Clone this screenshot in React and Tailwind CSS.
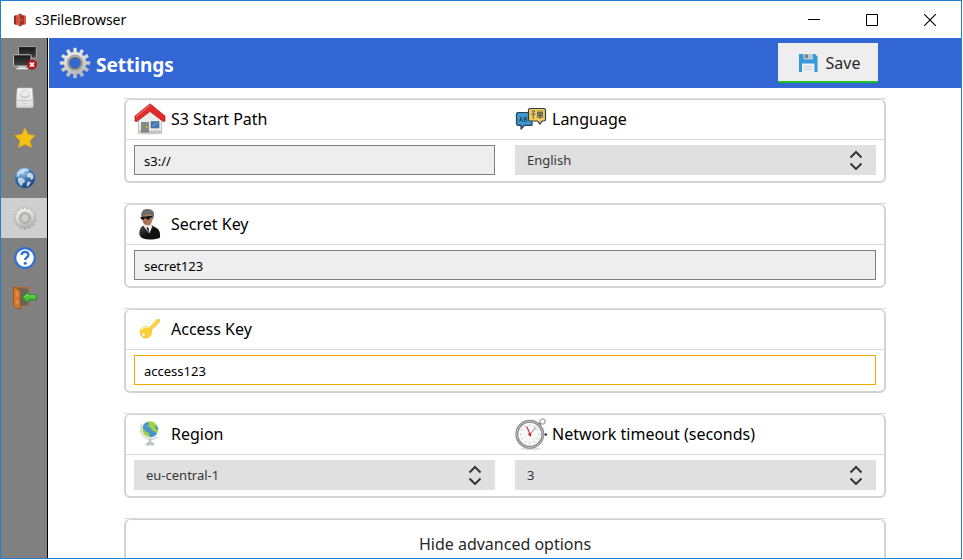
import { useState } from "react";

const svgProps = { "aria-hidden": true, className: "block size-full" };

function AppLogo() {
  return (
    <svg viewBox="0 0 14 16" {...svgProps}>
      <path d="M1 4 3 3v10l-2-1z" fill="#8c2f24" />
      <path d="M3 3 7 4.500v7L3 13z" fill="#d9503f" />
      <path d="M11 3 7 4.500v7l4 1.500z" fill="#a5352a" />
      <path d="M13 4l-2-1v10l2-1z" fill="#e0574a" />
      <path d="M7 1.500 9.500 3v3L7 6.500 4.500 6V3z" fill="#963025" />
      <path d="M7 1.500v5L4.500 6V3z" fill="#e25b4c" />
      <path d="M7 14.500 9.500 13v-3L7 9.500l-2.500.5v3z" fill="#963025" />
      <path d="M7 14.500v-5l-2.500.5v3z" fill="#e25b4c" />
      <path d="M5 7.200h4v1.600H5z" fill="#c9604f" />
    </svg>
  );
}

function Monitors() {
  return (
    <svg viewBox="0 0 24 24" {...svgProps}>
      <defs>
        <linearGradient id="screen" x1="0" y1="0" x2="0" y2="1">
          <stop offset="0" stopColor="#151515" />
          <stop offset="1" stopColor="#444" />
        </linearGradient>
      </defs>
      <rect x="5.500" y=".6" width="17.800" height="11.500" rx=".6" fill="url(#screen)" stroke="#aaa" />
      <path d="M6 20h6l1 2.500H5z" fill="#c8c8c8" />
      <rect x=".6" y="8.800" width="17.400" height="11.200" rx=".6" fill="url(#screen)" stroke="#c4c4c4" />
      <path d="M3.500 22.600h11" stroke="#ececec" strokeWidth="1.400" />
      <circle cx="19" cy="18.600" r="4.700" fill="#c31219" stroke="#8e0d12" strokeWidth=".6" />
      <path d="m17 16.600 4 4m0-4-4 4" stroke="#fff" strokeWidth="1.800" />
    </svg>
  );
}

function Drive() {
  return (
    <svg viewBox="0 0 24 24" {...svgProps}>
      <defs>
        <linearGradient id="drive" x1="0" y1="0" x2="0" y2="1">
          <stop offset="0" stopColor="#fafafa" />
          <stop offset="1" stopColor="#dadada" />
        </linearGradient>
      </defs>
      <path d="M5.500 2h12.500q1.300 0 1.400 1.300l.8 11.700v5.200q0 1.500-1.600 1.500H4.900q-1.600 0-1.600-1.500V15l.8-11.700Q4.200 2 5.500 2z" fill="url(#drive)" stroke="#bbb" strokeWidth=".7" />
      <ellipse cx="11.800" cy="8" rx="5" ry="4" fill="#ebebeb" stroke="#cfcfcf" strokeWidth=".8" />
      <path d="M7.500 9.500q4.300 3.500 8.600 0" fill="none" stroke="#bcbcbc" />
      <path d="M4 14.500h15.700" stroke="#c6c6c6" strokeWidth=".8" />
      <rect x="7" y="16" width="9.800" height="3.500" rx=".6" fill="#f8f8f8" stroke="#c4c4c4" strokeWidth=".5" />
      <path d="M8.500 17.800h6.800" stroke="#aaa" strokeWidth=".8" />
    </svg>
  );
}

function Star() {
  return (
    <svg viewBox="0 0 24 24" {...svgProps}>
      <path d="m12 2 3.200 6.600 7 .9-5.200 4.900 1.400 7.100L12 18.200l-6.400 3.300L7 14.400 1.800 9.500l7-.9z" fill="#f5c211" stroke="#e8a020" strokeWidth=".8" strokeLinejoin="round" />
    </svg>
  );
}

function Earth() {
  return (
    <svg viewBox="0 0 24 24" {...svgProps}>
      <defs>
        <radialGradient id="earth" cx=".4" cy=".2" r=".8">
          <stop offset="0" stopColor="#a9cdea" />
          <stop offset=".5" stopColor="#3d76b4" />
          <stop offset="1" stopColor="#173d75" />
        </radialGradient>
      </defs>
      <circle cx="12" cy="12" r="10.300" fill="url(#earth)" stroke="#6d93c0" strokeWidth=".5" />
      <path d="M4 6.500Q7 2.500 12 2.200l4 1-1 2-4 .5-1 2-3 .3-1 2.500-2.500.5z" fill="#d8e9f5" opacity=".7" />
      <path d="m5 12 3-.5 3.500 2 .5 2.500-2.500 1.500-.5 3-2.500-2-1.500-3z" fill="#dceaf4" opacity=".8" />
      <path d="m14 8 3-1.500 3 2 .5 4-2.500 1.500-1-2.500-3-.5zM14.500 15.500l3.500.5-2.500 4-2 .5z" fill="#e6f0f7" opacity=".8" />
    </svg>
  );
}

function Cog({ id, teeth, depth, outline, hub, hole, rim }) {
  const points = [];
  for (let i = 0; i < teeth; i++) {
    const corners = [
      [-0.27, 15 - depth],
      [-0.19, 15],
      [0.19, 15],
      [0.27, 15 - depth],
    ];
    for (const [shift, radius] of corners) {
      const angle = ((i + shift) / teeth) * Math.PI * 2 - Math.PI / 2;
      points.push(`${(16 + radius * Math.cos(angle)).toFixed(2)},${(16 + radius * Math.sin(angle)).toFixed(2)}`);
    }
  }
  return (
    <svg viewBox="0 0 32 32" {...svgProps}>
      <defs>
        <linearGradient id={id} x1="0" y1="0" x2=".3" y2="1">
          <stop offset="0" stopColor="#f4f4f2" />
          <stop offset=".5" stopColor="#dededc" />
          <stop offset="1" stopColor="#b4b4b2" />
        </linearGradient>
      </defs>
      <polygon points={points.join(" ")} fill={`url(#${id})`} stroke={outline} strokeWidth=".6" strokeLinejoin="round" />
      <circle cx="16" cy="16" r="7.300" fill="none" stroke={rim} strokeWidth="1.800" />
      <circle cx="16" cy="16" r="5.700" fill={hole} stroke={hub} strokeWidth="1.200" />
    </svg>
  );
}

function Help() {
  return (
    <svg viewBox="0 0 24 24" {...svgProps}>
      <circle cx="12" cy="12" r="9.800" fill="#fff" stroke="#2f6fd6" strokeWidth="2.200" />
      <path d="M8.600 9Q8.800 5.900 12.100 5.900q3.300 0 3.300 2.800 0 1.600-1.800 2.800-1.400.9-1.400 2.600" fill="none" stroke="#2f6fd6" strokeWidth="2.300" />
      <circle cx="12.200" cy="17.200" r="1.500" fill="#2f6fd6" />
    </svg>
  );
}

function Exit() {
  return (
    <svg viewBox="0 0 24 24" {...svgProps}>
      <path d="M.5 1h15.500v19H.5z" fill="#b8612a" />
      <path d="M2 2.500h12.300V19.500H2z" fill="#666661" />
      <path d="m.5 1 7 3.500v19l-7-3.500z" fill="#d9782f" stroke="#93480f" strokeWidth=".7" />
      <path d="m2 4 4 2v6L2 10.500zm0 8.500L6 14v5.500L2 17.800z" fill="#e18a43" stroke="#b4601f" strokeWidth=".5" />
      <path d="m9.200 11.300 6.300-5.500v3h8v5h-8v3.200z" fill="#4cc435" stroke="#20851a" strokeWidth=".9" strokeLinejoin="round" />
      <path d="m11 10.900 3.600-3.100v2h8" fill="none" stroke="#90e57c" strokeWidth=".7" />
    </svg>
  );
}

function Floppy() {
  return (
    <svg viewBox="0 0 20 20" {...svgProps}>
      <path d="M1 1h16L19.500 3.500V19H1z" fill="#3498db" />
      <path d="M5.500 1H15v5.500H5.500z" fill="#bcc8ce" />
      <path d="M7 1.500h3V5H7z" fill="#6f8088" />
      <path d="M4 10.500h12.500V19H4z" fill="#ecf0f1" />
      <path d="M6 13.500h8.500M6 16h8.500" stroke="#c3cbce" />
    </svg>
  );
}

function House() {
  return (
    <svg viewBox="0 0 32 32" {...svgProps}>
      <ellipse cx="16" cy="30" rx="13" ry="1.500" fill="#ccc" />
      <path d="M4.500 16 16 6.500 27.500 16v13.500h-23z" fill="#ececec" stroke="#aaa" strokeWidth=".7" />
      <path d="M4 27.500h24v2H4z" fill="#c5c5c5" />
      <path d="M7.500 19.500h7V29h-7z" fill="#858a7d" stroke="#6c6c68" strokeWidth=".6" />
      <circle cx="12.800" cy="24" r=".9" fill="#e4cb24" />
      <path d="M17 18.500h8v6.500h-8z" fill="#4178bb" stroke="#5c656e" strokeWidth=".6" />
      <path d="m18 23 6-3" stroke="#74a4da" />
      <path d="M16 .8 31 13v5q-1.200 1.200-2.500 0L16 8.500 3.500 18q-1.300 1.200-2.500 0v-5z" fill="#e12a2a" stroke="#b91a1a" strokeWidth=".7" />
      <path d="M16 2.300 2 13.800" stroke="#f88" strokeWidth="1" />
    </svg>
  );
}

function Languages() {
  return (
    <svg viewBox="0 0 32 32" {...svgProps}>
      <path d="M3 9.500h14v12.800H9.500L6 26v-3.700H3q-1.500 0-1.500-1.500V11Q1.500 9.500 3 9.500z" fill="#3b97d3" stroke="#2c3e50" strokeWidth="1.200" strokeLinejoin="round" />
      <path d="m4.500 18.500 1.500-4.300 1.500 4.300M5 17.200h2M9.300 14.200v4.300h1.200q1.300 0 1.300-1.100t-1.300-1.100h-1 .8q1.200 0 1.200-1.100t-1.200-1z" fill="none" stroke="#2c3e50" strokeWidth=".9" />
      <path d="M15 5.500h14q1.500 0 1.500 1.500v9.500q0 1.500-1.500 1.500h-2l-2 3.200-2.500-3.200H15q-1.500 0-1.500-1.500V7q0-1.500 1.500-1.500z" fill="#f6cd5b" stroke="#2c3e50" strokeWidth="1.200" strokeLinejoin="round" />
      <path d="M16.500 8h3.500l-2 2M16 11h4.500M18.300 11v4.500M22.500 7.500l.8 1M25 7.300v1M28 7.500l-.8 1M22.500 9.300h5v3.200h-5zM25 9.300v6.700M21.500 14h7M22.500 10.900h5" fill="none" stroke="#2c3e50" strokeWidth=".8" />
    </svg>
  );
}

function Agent() {
  return (
    <svg viewBox="0 0 32 32" {...svgProps}>
      <defs>
        <linearGradient id="suit" x1="0" y1="0" x2="1" y2="1">
          <stop offset="0" stopColor="#555" />
          <stop offset=".5" stopColor="#111" />
        </linearGradient>
      </defs>
      <path d="M8.500 18Q5.500 20 5.300 25q0 3.500 3.200 5.200 6 2.300 13 .8 3.500-.4 4.500-1.500.5-6-2-8.500l-6.500-4z" fill="url(#suit)" />
      <path d="m9.500 16 7.500.5 1.200 2-2.700 7-5-6z" fill="#f1f1f1" />
      <path d="m12.500 19 2 .8 1 5.500-2.500-4z" fill="#222" />
      <path d="M7.800 6h10q1.500 3.500.2 7l-1.500 4-3.500.5q-2.800-.5-3.700-2.700Q7.400 10 7.800 6z" fill="#b07855" />
      <path d="M7.300 8.500q-.7-6.500 4.700-7.500 6.500-.8 8 4 .4 4.500-1.500 7l-1-4.500-1-1.500q-4.500.3-9.200 2.500z" fill="#6c6c6c" />
      <path d="M6.500 8.700q4.500.2 9-.6l2.500-.2v1.300l-2 .5-.7 1.800q-2.500.7-3.300-1.200l-1.500-.1-.7 1.500q-2.300.5-3-1.300z" fill="#111" />
      <path d="M9.500 14.300h3" stroke="#7c4a35" strokeWidth=".9" />
    </svg>
  );
}

function Key() {
  return (
    <svg viewBox="0 0 32 32" {...svgProps}>
      <path d="M14 16.500 23 6.500h2.500V9l-1.800.3v2l-2 .2-.2 2.200-2 .3-2.500 4z" fill="#fbd44b" stroke="#f3bf2c" strokeWidth=".9" strokeLinejoin="round" />
      <circle cx="11.800" cy="19.300" r="5.600" fill="#fdd22e" stroke="#f3c022" strokeWidth=".9" />
      <path d="M7.500 16.500q3-3.500 7.500-1.500" fill="none" stroke="#fff0a6" strokeWidth="1.200" />
      <circle cx="9.500" cy="21.500" r="1.900" fill="#fff" stroke="#dfa917" strokeWidth=".6" />
    </svg>
  );
}

function DeskGlobe() {
  return (
    <svg viewBox="0 0 32 32" {...svgProps}>
      <path d="M8 5.500Q4.500 13 10 18.500t13.500.5" fill="none" stroke="#d3d7da" strokeWidth="1.500" />
      <path d="M14.500 20.500h3v4h-3z" fill="#c4c9cb" />
      <path d="M11.500 27.500q.2-3.800 4.500-3.800t4.500 3.800z" fill="#bfc4c6" />
      <circle cx="16.200" cy="11.300" r="8" fill="#a0d14a" />
      <path d="M8.500 9.500 12 8l4 1 2 3.500 3.500 1.500 1.500 1.500q-2.500 3.800-7 3.800l-1-4-3.500-2z" fill="#4596cc" />
      <path d="M8.500 9q.8-3.500 4.500-5l2.500 2-3 2.500zM21 7l3 2.500.2 3-2.700-2z" fill="#4596cc" />
    </svg>
  );
}

function Stopwatch() {
  const ticks = Array.from({ length: 12 }, (_, i) => i * 30);
  return (
    <svg viewBox="0 0 32 32" {...svgProps}>
      <ellipse cx="16" cy="31" rx="11" ry=".9" fill="#ddd" />
      <circle cx="27.500" cy="3.500" r="2.600" fill="none" stroke="#aaa" strokeWidth="1.300" />
      <path d="m23 8 2.500-2.800" stroke="#888" strokeWidth="2.600" />
      <path d="M29.500 15.500h2.500v2h-2.500z" fill="#222" />
      <circle cx="14.800" cy="16.300" r="13" fill="#f8f8f7" stroke="#858585" strokeWidth="3" />
      <circle cx="14.800" cy="16.300" r="13.200" fill="none" stroke="#c4c4c4" strokeWidth="1" />
      {ticks.map((angle) => (
        <path key={angle} d="M14.800 6.500v1.600" stroke="#b5b5b5" strokeWidth=".9" transform={`rotate(${angle} 14.800 16.300)`} />
      ))}
      <path d="m14.800 16.300 6.200-7" stroke="#555" strokeWidth=".8" />
      <path d="M11.800 8.500 15.800 18.500" stroke="#d8262b" strokeWidth="1.100" />
      <circle cx="14.800" cy="16.300" r="1.400" fill="#c71f25" />
    </svg>
  );
}

const navItems = [
  { name: "Disconnect", icon: <Monitors /> },
  { name: "Drives", icon: <Drive /> },
  { name: "Bookmarks", icon: <Star /> },
  { name: "Browse", icon: <Earth /> },
  {
    name: "Settings",
    icon: <Cog id="navCog" teeth={14} depth={2} outline="#8a8a8a" rim="#b4b4b2" hub="#999" hole="#cfcfcf" />,
    active: true,
  },
  { name: "Help", icon: <Help /> },
  { name: "Exit", icon: <Exit /> },
];

function TitleBar() {
  const button = "flex h-full w-[58px] items-center justify-center";
  return (
    <header className="flex h-[37px] shrink-0 items-center bg-white pr-0.5">
      <span className="ml-3 h-4 w-[14px]">
        <AppLogo />
      </span>
      <span className="ml-2 flex-1 text-sm text-black">s3FileBrowser</span>
      <button type="button" aria-label="Minimize" className={button}>
        <svg width="12" height="12" viewBox="0 0 12 12"><path d="M0 5.500h12" stroke="#000" /></svg>
      </button>
      <button type="button" aria-label="Maximize" className={button}>
        <svg width="12" height="12" viewBox="0 0 12 12"><path d="M.5.500h11v11H.5z" fill="none" stroke="#000" /></svg>
      </button>
      <button type="button" aria-label="Close" className={button}>
        <svg width="12" height="12" viewBox="0 0 12 12"><path d="m0 0 12 12M12 0 0 12" stroke="#000" strokeWidth="1.100" /></svg>
      </button>
    </header>
  );
}

function Sidebar() {
  return (
    <nav className="mr-px flex w-[47px] shrink-0 flex-col border-r border-black bg-[#808080]">
      {navItems.map((item) => (
        <button
          key={item.name}
          type="button"
          aria-label={item.name}
          className={`flex h-10 items-center justify-center pl-0.5 ${item.active ? "bg-[#cfcfcf]" : ""}`}
        >
          <span className="size-6">{item.icon}</span>
        </button>
      ))}
    </nav>
  );
}

function Card({ children }) {
  return (
    <section className="border-t border-[#dcdcdc]">
      <div className="flex rounded-md border-2 border-t border-[#d3d3d3]">{children}</div>
    </section>
  );
}

const fieldPadding = {
  full: "px-2",
  left: "pr-[10px] pl-2",
  right: "pr-2 pl-[10px]",
};

function Field({ id, label, icon, side = "full", children }) {
  const padding = fieldPadding[side];
  return (
    <div className="min-w-0 flex-1">
      <label
        htmlFor={id}
        className={`flex h-10 items-center gap-[5px] border-b border-[#dadada] pb-0.5 text-base whitespace-nowrap text-black ${padding}`}
      >
        <span className="size-8 shrink-0">{icon}</span>
        {label}
      </label>
      <div className={`pt-[5px] pb-[6px] ${padding}`}>{children}</div>
    </div>
  );
}

function TextInput({ id, value, highlighted }) {
  const [text, setText] = useState(value);
  return (
    <input
      id={id}
      type="text"
      value={text}
      onChange={(event) => setText(event.target.value)}
      className={`block h-[30px] w-full border px-[9px] pt-0.5 text-[13px] text-black outline-none ${
        highlighted ? "border-[#f5a800] bg-white" : "border-[#808080] bg-[#eeeeee]"
      }`}
    />
  );
}

function Select({ id, options }) {
  return (
    <div className="relative">
      <select id={id} className="block h-[30px] w-full appearance-none bg-[#e0e0e0] px-3 pt-0.5 text-[13px] text-[#353637] outline-none">
        {options.map((option) => (
          <option key={option}>{option}</option>
        ))}
      </select>
      <svg viewBox="0 0 14 20" aria-hidden="true" className="pointer-events-none absolute top-[5px] right-[13px] h-5 w-[14px]">
        <path d="m1.500 7.500 5.500-5.500 5.500 5.500M1.500 13.500l5.500 5.500 5.500-5.500" fill="none" stroke="#353637" strokeWidth="2" />
      </svg>
    </div>
  );
}

export default function App() {
  return (
    <div className="h-screen bg-white pr-px pb-px font-['Noto_Sans','Open_Sans',sans-serif]">
      <div className="flex h-full flex-col overflow-hidden border border-[#1c80d4]">
        <TitleBar />
        <div className="flex min-h-0 flex-1">
          <Sidebar />
          <main className="flex min-w-0 flex-1 flex-col overflow-hidden">
            <div className="flex h-[50px] shrink-0 items-center bg-[#3367d6] pr-[83px] pl-[10px]">
              <span className="size-8">
                <Cog id="headerCog" teeth={12} depth={4} outline="#c4c4c2" rim="#a3a3a1" hub="#6f6f6f" hole="#3367d6" />
              </span>
              <h1 className="flex-1 pt-1 pl-[5px] text-[19px] font-bold text-white">Settings</h1>
              <button type="button" className="flex h-10 w-[100px] items-center justify-center gap-2 border-b-2 border-[#21be2b] bg-[#eeeeee] pt-0.5 pl-0.5 text-base text-[#26282a]">
                <span className="size-5">
                  <Floppy />
                </span>
                Save
              </button>
            </div>
            <form className="flex flex-col gap-5 px-[75px] pt-[10px]">
              <Card>
                <Field id="path" label="S3 Start Path" icon={<House />} side="left">
                  <TextInput id="path" value="s3://" />
                </Field>
                <Field id="language" label="Language" icon={<Languages />} side="right">
                  <Select id="language" options={["English"]} />
                </Field>
              </Card>
              <Card>
                <Field id="secret" label="Secret Key" icon={<Agent />}>
                  <TextInput id="secret" value="secret123" />
                </Field>
              </Card>
              <Card>
                <Field id="access" label="Access Key" icon={<Key />}>
                  <TextInput id="access" value="access123" highlighted />
                </Field>
              </Card>
              <Card>
                <Field id="region" label="Region" icon={<DeskGlobe />} side="left">
                  <Select id="region" options={["eu-central-1"]} />
                </Field>
                <Field id="timeout" label="Network timeout (seconds)" icon={<Stopwatch />} side="right">
                  <Select id="timeout" options={["3"]} />
                </Field>
              </Card>
              <Card>
                <button type="button" className="h-12 w-full text-base text-[#26282a]">
                  Hide advanced options
                </button>
              </Card>
            </form>
          </main>
        </div>
      </div>
    </div>
  );
}
